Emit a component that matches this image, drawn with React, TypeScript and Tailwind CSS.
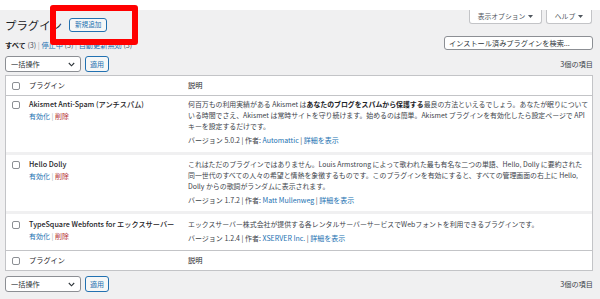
import React from "react";

const Check = () => (
  <span className="block w-[8px] h-[8px] border border-[#8c8f94] rounded-[2px] bg-white" />
);

const Tri = () => (
  <svg width="5" height="3" viewBox="0 0 5 3" className="ml-[3px]">
    <path d="M0 0 L5 0 L2.5 3 Z" fill="#50575e" />
  </svg>
);

const Chevron = () => (
  <svg width="7" height="5" viewBox="0 0 7 5">
    <path d="M0.8 1 L3.5 3.8 L6.2 1" fill="none" stroke="#2c3338" strokeWidth="1.1" />
  </svg>
);

const Bulk = () => (
  <div className="flex items-center h-[16px]">
    <div className="w-[76px] h-[16px] border border-[#8c8f94] rounded-[3px] bg-white flex items-center justify-between pl-[5px] pr-[5px] text-[7.2px] text-[#2c3338]">
      <span>一括操作</span>
      <Chevron />
    </div>
    <div className="ml-[4px] w-[24px] h-[16px] border border-[#2271b1] rounded-[3px] bg-[#f6f7f7] flex items-center justify-center text-[7px] text-[#2271b1]">
      適用
    </div>
  </div>
);

type RowProps = {
  title: string;
  lines: React.ReactNode[];
  version: string;
  author: string;
  pt: string;
  pb: string;
  last?: boolean;
};

const Row = ({ title, lines, version, author, pt, pb, last }: RowProps) => (
  <div
    className={
      "grid grid-cols-[18px_159px_1fr] " +
      pb +
      (last ? "" : " border-b-[3px] border-[#f0f0f1]")
    }
  >
    <div className={"pl-[6px] " + pt}>
      <div className="h-[11px] flex items-center">
        <Check />
      </div>
    </div>
    <div className={"pl-[5px] " + pt}>
      <div className="text-[7.2px] leading-[11px] font-medium text-[#1d2327] whitespace-nowrap">{title}</div>
      <div className="mt-[1px] text-[7px] leading-[11px] whitespace-nowrap">
        <span className="text-[#2271b1]">有効化</span>
        <span className="text-[#a7aaad]"> | </span>
        <span className="text-[#b32d2e]">削除</span>
      </div>
    </div>
    <div className={"pl-[5px] " + pt}>
      <div className="text-[6.9px] leading-[11px] text-[#3c434a] whitespace-nowrap">
        {lines.map((l, i) => (
          <div key={i}>{l}</div>
        ))}
      </div>
      <div className="mt-[3px] text-[7px] leading-[11px] text-[#3c434a] whitespace-nowrap">
        バージョン {version} | 作者: <span className="text-[#2271b1]">{author}</span> |{" "}
        <span className="text-[#2271b1]">詳細を表示</span>
      </div>
    </div>
  </div>
);

export default function App() {
  return (
    <div className="relative w-[600px] h-[299px] overflow-hidden bg-[#f0f0f1] text-[#3c434a] font-['Noto_Sans_CJK_JP',sans-serif]">
      <div className="h-[10px] bg-white" />
      <div className="pl-[5px] pr-[7px]">
        {/* title row */}
        <div className="flex justify-between items-start h-[26px]">
          <div className="flex items-center mt-[7px] h-[16px]">
            <h1 className="text-[11.4px] leading-[16px] text-[#1d2327] font-normal">プラグイン</h1>
            <div className="ml-[7px] h-[14px] px-[5px] border border-[#2271b1] rounded-[3px] bg-[#f6f7f7] flex items-center text-[6.6px] text-[#2271b1]">
              新規追加
            </div>
          </div>
          <div className="flex gap-[4px] mr-[1px]">
            <div className="w-[73px] h-[14px] bg-white border-x border-b border-[#c3c4c7] rounded-b-[3px] flex items-center justify-center text-[6.8px] text-[#50575e]">
              表示オプション
              <Tri />
            </div>
            <div className="w-[46px] h-[14px] bg-white border-x border-b border-[#c3c4c7] rounded-b-[3px] flex items-center justify-center text-[6.8px] text-[#50575e]">
              ヘルプ
              <Tri />
            </div>
          </div>
        </div>
        {/* filters + search */}
        <div className="flex justify-between items-start h-[14px]">
          <div className="mt-[4px] text-[7.2px] leading-[11px] whitespace-nowrap">
            <span className="font-bold text-[#1d2327]">すべて</span>
            <span className="text-[#50575e]"> (3)</span>
            <span className="text-[#a7aaad]"> | </span>
            <span className="text-[#2271b1]">停止中</span>
            <span className="text-[#50575e]"> (3)</span>
            <span className="text-[#a7aaad]"> | </span>
            <span className="text-[#2271b1]">自動更新無効</span>
            <span className="text-[#50575e]"> (3)</span>
          </div>
          <div className="w-[149px] h-[14px] border border-[#8c8f94] rounded-[3px] bg-white flex items-center pl-[4px] text-[7.2px] text-[#2c3338] whitespace-nowrap">
            インストール済みプラグインを検索...
          </div>
        </div>
        {/* bulk row */}
        <div className="mt-[6px] flex justify-between items-center">
          <Bulk />
          <div className="text-[7.2px] text-[#3c434a]">3個の項目</div>
        </div>
        {/* table */}
        <div className="mt-[3px] border border-[#c3c4c7] bg-white">
          <div className="grid grid-cols-[18px_159px_1fr] h-[20px] items-center border-b border-[#c3c4c7] text-[7.2px] text-[#1d2327]">
            <div className="pl-[6px]">
              <Check />
            </div>
            <div className="pl-[5px]">プラグイン</div>
            <div className="pl-[5px]">説明</div>
          </div>
          <Row
            title="Akismet Anti-Spam (アンチスパム)"
            pt="pt-[3px]"
            pb="pb-[6px]"
            lines={[
              <>
                何百万もの利用実績がある Akismet は
                <b className="text-[#1d2327]">あなたのブログをスパムから保護する</b>
                最良の方法といえるでしょう。あなたが眠りについて
              </>,
              "いる時間でさえ、Akismet は常時サイトを守り続けます。始めるのは簡単。Akismet プラグインを有効化したら設定ページで API",
              "キーを設定するだけです。",
            ]}
            version="5.0.2"
            author="Automattic"
          />
          <Row
            title="Hello Dolly"
            pt="pt-[4px]"
            pb="pb-[5px]"
            lines={[
              "これはただのプラグインではありません。Louis Armstrong によって歌われた最も有名な二つの単語、Hello, Dolly に要約された",
              "同一世代のすべての人々の希望と情熱を象徴するものです。このプラグインを有効にすると、すべての管理画面の右上に Hello,",
              "Dolly からの歌詞がランダムに表示されます。",
            ]}
            version="1.7.2"
            author="Matt Mullenweg"
          />
          <Row
            title="TypeSquare Webfonts for エックスサーバー"
            pt="pt-[5px]"
            pb="pb-[6px]"
            last
            lines={["エックスサーバー株式会社が提供する各レンタルサーバーサービスでWebフォントを利用できるプラグインです。"]}
            version="1.2.4"
            author="XSERVER Inc."
          />
          <div className="grid grid-cols-[18px_159px_1fr] h-[20px] items-center border-t border-[#c3c4c7] text-[7.2px] text-[#1d2327]">
            <div className="pl-[6px]">
              <Check />
            </div>
            <div className="pl-[5px]">プラグイン</div>
            <div className="pl-[5px]">説明</div>
          </div>
        </div>
        {/* bottom bulk */}
        <div className="mt-[5px] flex justify-between items-center">
          <Bulk />
          <div className="text-[7.2px] text-[#3c434a]">3個の項目</div>
        </div>
      </div>
      {/* red annotation box */}
      <div className="absolute left-[50px] top-[5px] w-[88px] h-[40px] border-[6px] border-[#ff0000] rounded-[3px]" />
    </div>
  );
}
